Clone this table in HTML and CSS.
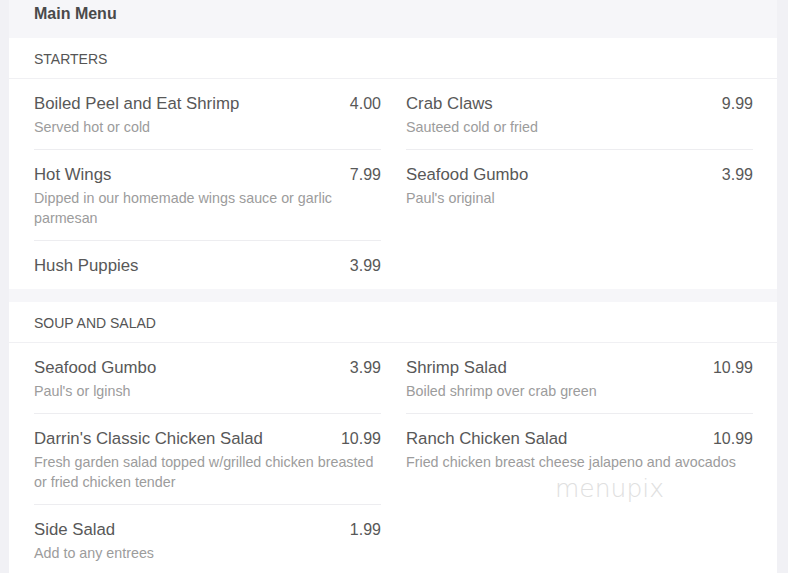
FILE: index.html
```html
<!DOCTYPE html>
<html>
<head>
<meta charset="utf-8">
<link rel="stylesheet" href="styles.css">
</head>
<body>
<div class="page">
  <div class="title">Main Menu</div>

  <section class="card">
    <div class="card-head">STARTERS</div>
    <div class="cols">
      <div class="col">
        <div class="item"><div class="row"><span class="name">Boiled Peel and Eat Shrimp</span><span class="price">4.00</span></div><div class="desc">Served hot or cold</div></div>
        <div class="item"><div class="row"><span class="name">Hot Wings</span><span class="price">7.99</span></div><div class="desc">Dipped in our homemade wings sauce or garlic parmesan</div></div>
        <div class="item"><div class="row"><span class="name">Hush Puppies</span><span class="price">3.99</span></div></div>
      </div>
      <div class="col">
        <div class="item"><div class="row"><span class="name">Crab Claws</span><span class="price">9.99</span></div><div class="desc">Sauteed cold or fried</div></div>
        <div class="item"><div class="row"><span class="name">Seafood Gumbo</span><span class="price">3.99</span></div><div class="desc">Paul's original</div></div>
      </div>
    </div>
  </section>

  <section class="card">
    <div class="card-head">SOUP AND SALAD</div>
    <div class="cols">
      <div class="col">
        <div class="item"><div class="row"><span class="name">Seafood Gumbo</span><span class="price">3.99</span></div><div class="desc">Paul's or lginsh</div></div>
        <div class="item"><div class="row"><span class="name">Darrin's Classic Chicken Salad</span><span class="price">10.99</span></div><div class="desc">Fresh garden salad topped w/grilled chicken breasted or fried chicken tender</div></div>
        <div class="item"><div class="row"><span class="name">Side Salad</span><span class="price">1.99</span></div><div class="desc">Add to any entrees</div></div>
      </div>
      <div class="col">
        <div class="item"><div class="row"><span class="name">Shrimp Salad</span><span class="price">10.99</span></div><div class="desc">Boiled shrimp over crab green</div></div>
        <div class="item"><div class="row"><span class="name">Ranch Chicken Salad</span><span class="price">10.99</span></div><div class="desc">Fried chicken breast cheese jalapeno and avocados</div></div>
      </div>
    </div>
    <div class="watermark">menupix</div>
  </section>
</div>
</body>
</html>
```
FILE: styles.css
```css
html, body {
  margin: 0;
  padding: 0;
  background: #f1f1f5;
  font-family: "Liberation Sans", Arial, sans-serif;
}
.page {
  margin: 0 11px 0 9px;
  background: #f6f6f9;
  height: 573px;
  overflow: hidden;
}
.title {
  padding: 4px 25px 14px;
  font-size: 16px;
  line-height: 20px;
  font-weight: bold;
  color: #4a4a4a;
}
.card {
  position: relative;
  background: #fff;
  margin-bottom: 13px;
}
.card-head {
  padding: 11px 25px 9px;
  font-size: 14px;
  line-height: 20px;
  color: #555;
  border-bottom: 1px solid #f0f0f3;
}
.cols {
  display: grid;
  grid-template-columns: 1fr 1fr;
  column-gap: 25px;
  padding: 0 24px 0 25px;
}
.item {
  padding: 14px 0 12px;
  border-bottom: 1px solid #ededf0;
}
.item:last-child {
  border-bottom: none;
}
.row {
  display: flex;
  justify-content: space-between;
  font-size: 16.8px;
  line-height: 22px;
  color: #585858;
}
.price {
  font-size: 16px;
}
.desc {
  margin-top: 2px;
  font-size: 14.3px;
  line-height: 20px;
  color: #9c9c9c;
}
.watermark {
  position: absolute;
  left: 546px;
  top: 172px;
  font-family: "DejaVu Sans", sans-serif;
  font-weight: 200;
  font-size: 25px;
  color: #e0e0e0;
}
```
